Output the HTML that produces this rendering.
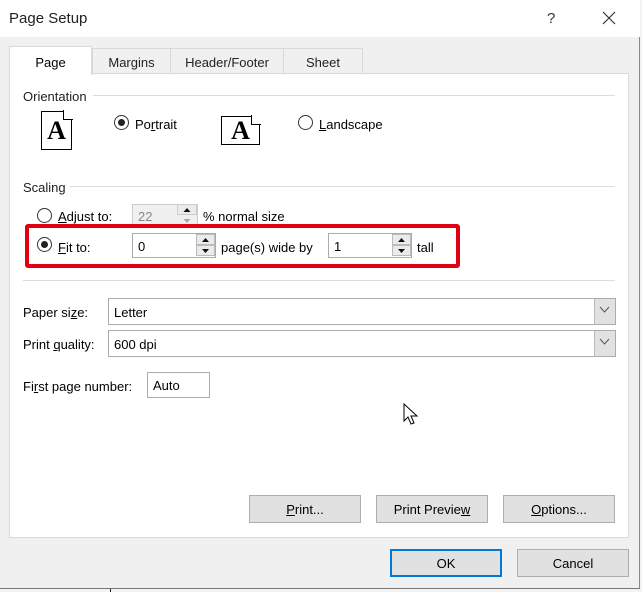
<!DOCTYPE html>
<html><head><meta charset="utf-8"><style>
*{box-sizing:border-box;margin:0;padding:0}
body{width:642px;height:592px;overflow:hidden;background:#f3f3f3;font-family:"Liberation Sans",sans-serif;font-size:13px;color:#000;position:relative}
.a{position:absolute}
.dlg{left:0;top:0;width:640px;height:589px;background:#f0f0f0;border-right:1px solid #888;border-bottom:1px solid #777}
.title{left:0;top:0;width:640px;height:37px;background:#fff}
.tab{top:48px;height:26px;border:1px solid #d9d9d9;border-bottom:none;background:#f0f0f0;text-align:center;line-height:28px;color:#222}
.panel{left:9px;top:73px;width:620px;height:465px;background:#fff;border:1px solid #d9d9d9}
.line{height:1px;background:#dcdcdc}
.radio{width:15px;height:15px;border:1px solid #333;border-radius:50%;background:#fff}
.radio.on::after{content:"";position:absolute;left:3px;top:3px;width:7px;height:7px;border-radius:50%;background:#222}
.inp{height:25px;border:1px solid #ababab;background:#fff;padding-left:5px;line-height:25px}
.btn{height:28px;border:1px solid #adadad;background:#e1e1e1;text-align:center;line-height:28px}
u{text-decoration:underline}
.page{border:1px solid #000;background:#fff;font-family:"Liberation Serif",serif;font-weight:bold;text-align:center}
</style></head><body>
<div class="a dlg"></div>
<div class="a title"></div>
<div class="a" style="left:9px;top:10px;font-size:15px;color:#222">Page Setup</div>
<div class="a" style="left:547px;top:10px;font-size:15px;color:#333">?</div>
<svg class="a" style="left:602px;top:11px" width="14" height="14"><path d="M1 1L13 13M13 1L1 13" stroke="#333" stroke-width="1.2"/></svg>
<div class="a tab" style="left:92px;width:79px">Margins</div>
<div class="a tab" style="left:170px;width:114px">Header/Footer</div>
<div class="a tab" style="left:283px;width:80px">Sheet</div>
<div class="a panel"></div>
<div class="a" style="left:9px;top:46px;width:83px;height:29px;background:#fff;border:1px solid #d9d9d9;border-bottom:none;text-align:center;line-height:31px">Page</div>
<div class="a" style="left:23px;top:89px;color:#222">Orientation</div>
<div class="a line" style="left:93px;top:95px;width:522px"></div>
<div class="a page" style="left:41px;top:111px;width:31px;height:39px;font-size:26px;line-height:38px">A</div>
<div class="a" style="left:63px;top:110px;width:10px;height:10px;background:#fff;border-left:1px solid #000;border-bottom:1px solid #000"></div>
<div class="a radio on" style="left:114px;top:115px"></div>
<div class="a" style="left:135px;top:117px">Po<u>r</u>trait</div>
<div class="a page" style="left:221px;top:116px;width:39px;height:29px;font-size:26px;line-height:28px">A</div>
<div class="a" style="left:251px;top:115px;width:10px;height:10px;background:#fff;border-left:1px solid #000;border-bottom:1px solid #000"></div>
<div class="a radio" style="left:298px;top:115px"></div>
<div class="a" style="left:319px;top:117px"><u>L</u>andscape</div>
<div class="a" style="left:23px;top:180px;color:#222">Scaling</div>
<div class="a line" style="left:70px;top:186px;width:545px"></div>
<div class="a radio" style="left:37px;top:208px"></div>
<div class="a" style="left:58px;top:209px"><u>A</u>djust to:</div>
<div class="a inp" style="left:132px;top:204px;width:66px;height:24px;background:#f0f0f0;color:#888;border-color:#ccc;line-height:24px">22</div>
<svg class="a" style="left:177px;top:204px" width="21" height="23"><rect x="0.5" y="0.5" width="19" height="10" fill="#ebebeb" stroke="#ccc"/><path d="M6.5 8L10 4L13.5 8Z" fill="#111"/><path d="M6.5 15L10 19L13.5 15Z" fill="#aaa"/></svg>
<div class="a" style="left:203px;top:209px">% normal size</div>
<div class="a" style="left:25px;top:224px;width:435px;height:44px;border:4px solid #e0000f;border-radius:3px"></div>
<div class="a radio on" style="left:37px;top:237px"></div>
<div class="a" style="left:58px;top:240px"><u>F</u>it to:</div>
<div class="a inp" style="left:132px;top:233px;width:84px">0</div>
<svg class="a" style="left:196px;top:234px" width="19" height="23"><rect x="0.5" y="0.5" width="18" height="10" fill="#ebebeb" stroke="#bbb"/><rect x="0.5" y="11.5" width="18" height="10" fill="#ebebeb" stroke="#bbb"/><path d="M6 8L9.5 4L13 8Z M6 15L9.5 19L13 15Z" fill="#111"/></svg>
<div class="a" style="left:221px;top:240px">page(s) wide by</div>
<div class="a inp" style="left:328px;top:233px;width:84px">1</div>
<svg class="a" style="left:392px;top:234px" width="19" height="23"><rect x="0.5" y="0.5" width="18" height="10" fill="#ebebeb" stroke="#bbb"/><rect x="0.5" y="11.5" width="18" height="10" fill="#ebebeb" stroke="#bbb"/><path d="M6 8L9.5 4L13 8Z M6 15L9.5 19L13 15Z" fill="#111"/></svg>
<div class="a" style="left:417px;top:240px">tall</div>
<div class="a line" style="left:23px;top:280px;width:592px"></div>
<div class="a" style="left:23px;top:305px">Paper si<u>z</u>e:</div>
<div class="a inp" style="left:108px;top:298px;width:508px;height:27px;line-height:27px">Letter</div>
<div class="a" style="left:594px;top:299px;width:21px;height:25px;background:#e1e1e1;border-left:1px solid #bbb"></div>
<svg class="a" style="left:599px;top:306px" width="11" height="8"><path d="M1 1L5.5 6L10 1" fill="none" stroke="#555"/></svg>
<div class="a" style="left:23px;top:337px">Print <u>q</u>uality:</div>
<div class="a inp" style="left:108px;top:330px;width:508px;height:27px;line-height:27px">600 dpi</div>
<div class="a" style="left:594px;top:331px;width:21px;height:25px;background:#e1e1e1;border-left:1px solid #bbb"></div>
<svg class="a" style="left:599px;top:338px" width="11" height="8"><path d="M1 1L5.5 6L10 1" fill="none" stroke="#555"/></svg>
<div class="a" style="left:23px;top:379px">Fi<u>r</u>st page number:</div>
<div class="a inp" style="left:147px;top:372px;width:63px;height:26px">Auto</div>
<svg class="a" style="left:403px;top:403px" width="16" height="24"><path d="M1 1L1 18L5 14L8 21L11 20L8 13L14 13Z" fill="#fff" stroke="#000"/></svg>
<div class="a btn" style="left:249px;top:495px;width:112px"><u>P</u>rint...</div>
<div class="a btn" style="left:376px;top:495px;width:112px">Print Previe<u>w</u></div>
<div class="a btn" style="left:503px;top:495px;width:112px"><u>O</u>ptions...</div>
<div class="a btn" style="left:390px;top:549px;width:112px;border:2px solid #0078d7;line-height:26px">OK</div>
<div class="a btn" style="left:517px;top:549px;width:112px">Cancel</div>
<div class="a" style="left:110px;top:589px;width:1px;height:3px;background:#222"></div>
</body></html>
